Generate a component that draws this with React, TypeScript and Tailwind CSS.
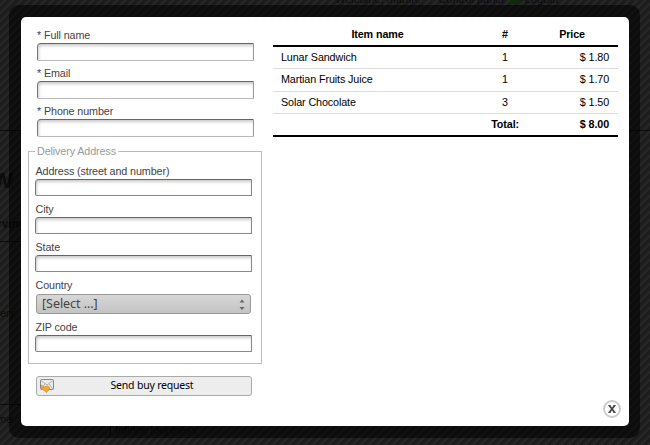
import React from 'react';

const STRIPES =
  'bg-[repeating-linear-gradient(135deg,#1c1c1c_0px,#1c1c1c_2px,#2a2a2a_4px,#1c1c1c_5.657px)]';

function TextField({ label, inset = false }: { label: string; inset?: boolean }) {
  return (
    <label className="block h-[38px] text-[#444]">
      <span className={`block h-[16px] leading-[16px] ${inset ? 'pl-[0.5px]' : ''}`}>{label}</span>
      <input
        type="text"
        className={`block w-[217px] rounded-tl-[4px] rounded-bl-[2px] border border-t-[#666] border-l-[#777] bg-white shadow-[inset_1px_2px_3px_#ccc] outline-none ${
          inset ? 'h-[17px] border-r-[#888] border-b-[#888]' : 'h-[18px] border-r-[#999] border-b-[#bbb]'
        }`}
      />
    </label>
  );
}

function MailIcon() {
  return (
    <svg width="14" height="14" viewBox="0 0 14 14" className="shrink-0">
      <rect x="0.5" y="0.5" width="13" height="10" rx="1" fill="#ececec" stroke="#888" />
      <path d="M1 1.5 L7 6 L13 1.5 M1 10 L5 5 M13 10 L9 5" fill="none" stroke="#aaa" strokeWidth="0.9" />
      <path d="M1.5 6 L4 8 L7.5 7 L9.8 8.5 L9 10.5 L6.5 13.5 L4 11.3 L1.8 10.3 Z" fill="#f7a52d" stroke="#dd8a22" strokeWidth="0.7" />
    </svg>
  );
}

const items = [
  ['Lunar Sandwich', '1', '$ 1.80', 'h-[22px]'],
  ['Martian Fruits Juice', '1', '$ 1.70', 'h-[23px] pb-px'],
  ['Solar Chocolate', '3', '$ 1.50', 'h-[22px]'],
];

const COLS = 'grid grid-cols-[211px_42px_92px] items-center';

function OrderTable() {
  return (
    <div className="w-[345px] text-black">
      <div className={`${COLS} h-[24px] border-b-2 border-black pt-px text-center font-bold`}>
        <span className="pr-[2px]">Item name</span>
        <span>#</span>
        <span>Price</span>
      </div>
      {items.map(([name, count, price, height]) => (
        <div key={name} className={`${COLS} ${height} border-b border-[#ddd]`}>
          <span className="pl-[8px]">{name}</span>
          <span className="text-center">{count}</span>
          <span className="pr-[9px] text-right">{price}</span>
        </div>
      ))}
      <div className="grid h-[23px] grid-cols-[253px_92px] items-center border-b-2 border-black text-right font-bold">
        <span className="pr-[7px]">Total:</span>
        <span className="pr-[9px]">$ 8.00</span>
      </div>
    </div>
  );
}

function PageBehind() {
  return (
    <div className="flex h-[445px] flex-col overflow-hidden text-[11px] leading-none whitespace-nowrap text-[#0c0c0c]">
      <header className="-mt-[6px] flex h-[137px] items-start gap-[18px] border-b pl-[335px]">
        <span>Welcome, martin!</span>
        <span>Control panel</span>
        <span className="-ml-[12px] flex gap-[5px]">
          <i className="h-[10px] w-[10px] bg-[#102a0b]" />
          Logout
        </span>
      </header>
      <h1 className="-ml-[8px] h-[87px] pt-[39px] text-[22px] font-bold">W</h1>
      <h2 className="-ml-[3px] h-[24px] w-[26px] border-b text-[12px] font-bold">rving</h2>
      <p className="h-[163px] w-[20px] border-b pt-[66px]">ery</p>
      <p className="-ml-[3px] pt-[9px]">me</p>
      <p className="ml-[110px] border-l pl-[4px]">Infinite loopiness</p>
    </div>
  );
}

export default function App() {
  return (
    <div className={`relative h-[445px] w-[650px] overflow-hidden font-['Liberation_Sans',Arial,sans-serif] text-[10.75px] ${STRIPES}`}>
      <PageBehind />
      <div className="absolute inset-0 pt-[5px] pl-[9px] tracking-[-0.11px]">
        <div className="h-[433px] w-[631px] rounded-[10px] bg-black/55 p-[12px]">
          <div className="flex h-[409px] w-[608px] rounded-[5px] bg-white">
            <form className="w-[252px] pt-[10px] pl-[7px]">
              <div className="pl-[9px]">
                <TextField label="* Full name" />
                <TextField label="* Email" />
                <TextField label="* Phone number" />
              </div>
              <fieldset className="mt-[4px] h-[219px] w-[234px] border border-[#bbb] pl-[6px]">
                <legend className="h-[13px] px-[2px] leading-[13px] text-[#999]">Delivery Address</legend>
                <div className="pt-[5px]">
                  <TextField inset label="Address (street and number)" />
                  <TextField inset label="City" />
                  <TextField inset label="State" />
                  <div className="h-[42px] text-[#444]">
                    <span className="block h-[17px] pl-[0.5px] leading-[16px]">Country</span>
                    <button type="button" className="ml-px flex h-[20px] w-[215px] items-center justify-between rounded-[3px] border border-[#999] bg-linear-to-b from-[#d7d7d7] to-[#c3c3c3] pr-[5px] pl-[5px] font-['Noto_Sans',sans-serif] text-[12.5px] leading-none tracking-[-0.05px] text-[#444]">
                      <span>[Select ...]</span>
                      <svg width="6" height="11" viewBox="0 0 6 11" className="fill-[#666]">
                        <path d="M0.5 3.5 L3 0.5 L5.5 3.5 Z M0.5 8 L3 11 L5.5 8 Z" />
                      </svg>
                    </button>
                  </div>
                  <TextField inset label="ZIP code" />
                </div>
              </fieldset>
              <button type="button" className="mt-[12px] ml-[8px] flex h-[20px] w-[216px] items-center rounded-[3px] border border-[#aaa] bg-[#ededed] pl-[3px] text-black">
                <MailIcon />
                <span className="grow pr-[1px] pb-px text-center font-['Noto_Sans',sans-serif] text-[10.5px] leading-none tracking-[-0.2px]">Send buy request</span>
              </button>
            </form>
            <div className="flex w-[356px] flex-col justify-between pt-[6px] pb-[8px]">
              <OrderTable />
              <button type="button" aria-label="Close" className="mr-[8px] flex size-[18px] items-center justify-center self-end rounded-full border-2 border-[#ccc] bg-white">
                <svg width="8" height="8" viewBox="0 0 8 8" fill="none" stroke="#444" strokeWidth="1.8">
                  <path d="M1.5 0.8 L6.5 7.2 M6.5 0.8 L1.5 7.2" />
                  <path d="M0.2 0.6 H2.7 M5.3 0.6 H7.8 M0.2 7.4 H2.7 M5.3 7.4 H7.8" strokeWidth="1" />
                </svg>
              </button>
            </div>
          </div>
        </div>
      </div>
    </div>
  );
}
